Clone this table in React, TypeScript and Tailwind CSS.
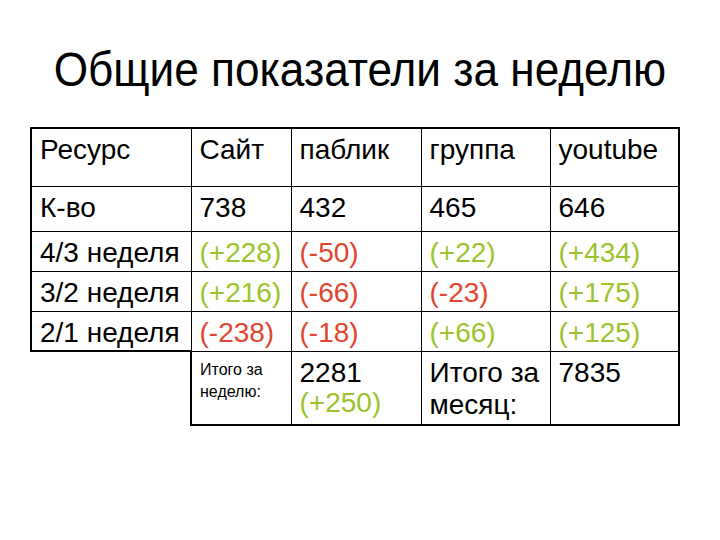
import React from "react";

const green = "text-[#9cc32c]";
const red = "text-[#e2452e]";

type Cell = { text: string; color?: string };

const weekRows: { label: string; cells: Cell[] }[] = [
  {
    label: "4/3 неделя",
    cells: [
      { text: "(+228)", color: green },
      { text: "(-50)", color: red },
      { text: "(+22)", color: green },
      { text: "(+434)", color: green },
    ],
  },
  {
    label: "3/2 неделя",
    cells: [
      { text: "(+216)", color: green },
      { text: "(-66)", color: red },
      { text: "(-23)", color: red },
      { text: "(+175)", color: green },
    ],
  },
  {
    label: "2/1 неделя",
    cells: [
      { text: "(-238)", color: red },
      { text: "(-18)", color: red },
      { text: "(+66)", color: green },
      { text: "(+125)", color: green },
    ],
  },
];

const td = "border border-black align-top px-2 pt-[5px] leading-8";

export default function App() {
  return (
    <div
      className="w-[720px] h-[540px] bg-white text-black overflow-hidden"
      style={{ fontFamily: '"Liberation Sans", Arial, sans-serif' }}
    >
      {/* title: the slide font is a bit taller/narrower than Arial */}
      <div className="h-[127px] pt-[46px] flex justify-center">
        <h1 className="text-[48px] leading-none scale-x-[0.92] whitespace-nowrap">
          Общие показатели за неделю
        </h1>
      </div>

      <table className="ml-[30px] border-collapse text-[28px] table-fixed">
        <colgroup>
          <col className="w-[160px]" />
          <col className="w-[100px]" />
          <col className="w-[130px]" />
          <col className="w-[129px]" />
          <col className="w-[129px]" />
        </colgroup>
        <tbody>
          <tr className="h-[58px]">
            <td className={`${td} border-t-2 border-l-2`}>Ресурс</td>
            <td className={`${td} border-t-2`}>Сайт</td>
            <td className={`${td} border-t-2`}>паблик</td>
            <td className={`${td} border-t-2`}>группа</td>
            <td className={`${td} border-t-2 border-r-2`}>youtube</td>
          </tr>
          <tr className="h-[45px]">
            <td className={`${td} border-l-2`}>К-во</td>
            <td className={td}>738</td>
            <td className={td}>432</td>
            <td className={td}>465</td>
            <td className={`${td} border-r-2`}>646</td>
          </tr>
          {weekRows.map((row, i) => (
            <tr key={row.label} className="h-10">
              <td className={`${td} border-l-2 ${i === 2 ? "border-b-2" : ""}`}>
                {row.label}
              </td>
              {row.cells.map((c, j) => (
                <td key={j} className={`${td} ${c.color} ${j === 3 ? "border-r-2" : ""}`}>
                  {c.text}
                </td>
              ))}
            </tr>
          ))}
          <tr className="h-[74px]">
            <td className="border-0" />
            <td className="border-2 border-t border-r border-black align-top px-2 pt-[7px] text-[16px] leading-[22px]">
              Итого за неделю:
            </td>
            <td className={`${td} border-b-2`}>
              2281
              <div className={`${green} leading-[28px]`}>(+250)</div>
            </td>
            <td className={`${td} border-b-2`}>Итого за месяц:</td>
            <td className={`${td} border-b-2 border-r-2`}>7835</td>
          </tr>
        </tbody>
      </table>
    </div>
  );
}
